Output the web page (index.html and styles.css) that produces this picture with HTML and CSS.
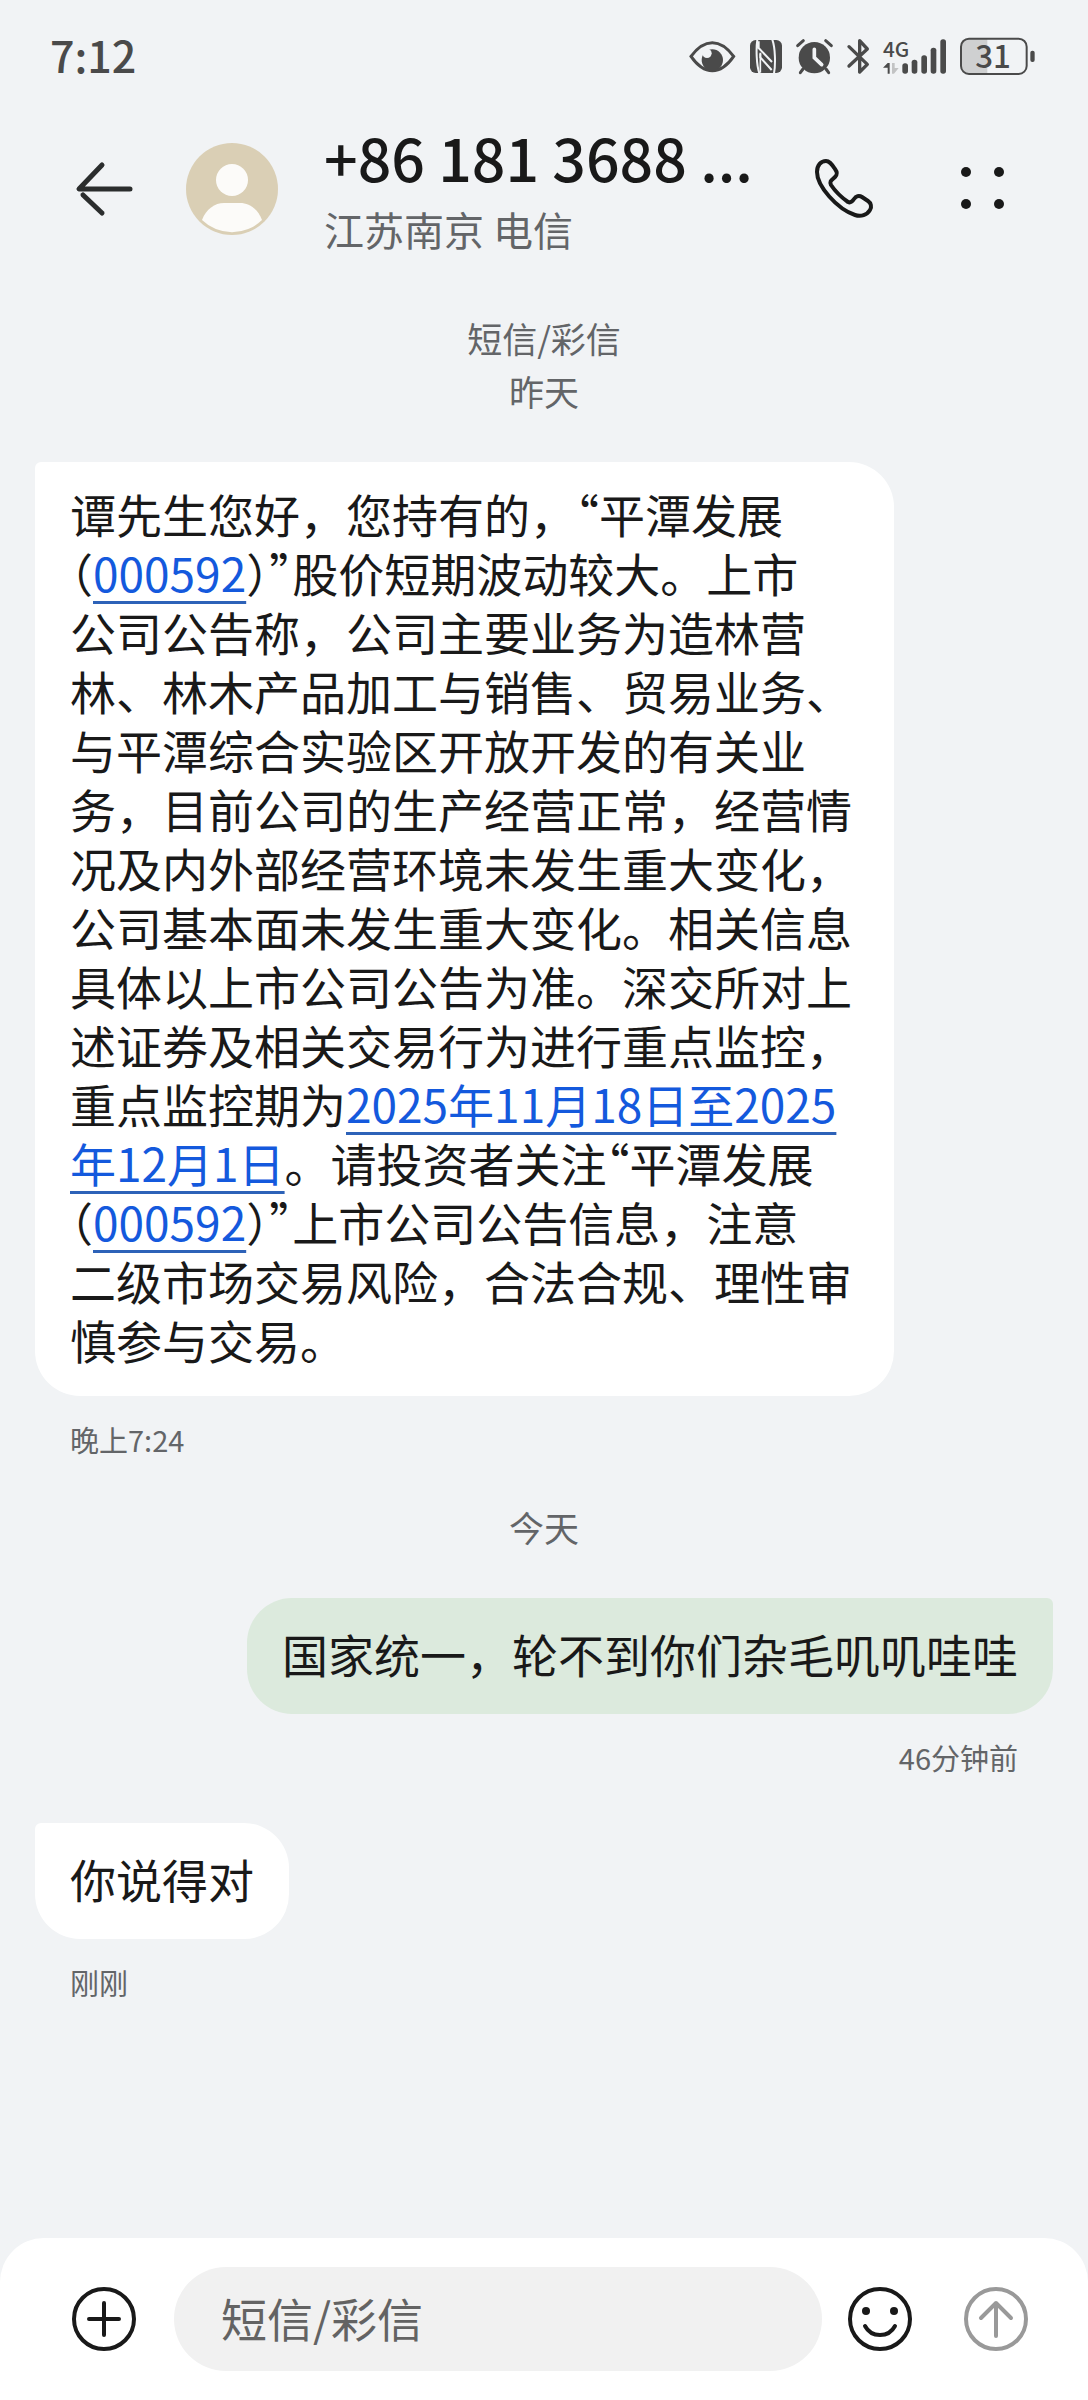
FILE: index.html
```html
<!DOCTYPE html>
<html lang="zh-CN">
<head>
    <meta charset="UTF-8">
    <meta name="viewport" content="width=device-width, initial-scale=1.0">
    <title>短信/彩信</title>
    <link rel="stylesheet" href="styles.css">
</head>
<body>
    <div class="status-bar">
        <span class="clock">7:12</span>
        <div class="status-icons">
            <!-- eye comfort -->
            <svg width="47" height="37" viewBox="54 52 141 111">
                <path d="M60 107C82 77 104 66 124 66s42 11 64 41c-22 32-44 43-64 43s-42-11-64-43z" fill="none" stroke="#4a4a4a" stroke-width="9"/>
                <circle cx="124" cy="118" r="32" fill="#4a4a4a"/>
                <circle cx="108" cy="98" r="14" fill="#f1f3f5"/>
            </svg>
            <!-- nfc -->
            <svg width="32" height="37" viewBox="237 52 96 111">
                <rect x="237" y="58" width="96" height="99" rx="17" fill="#4a4a4a"/>
                <path d="M259 57c-4 25-3 75 6 101M263 62v20l40 42M268 96v14l34 38M304 57c9 25 10 75 5 101" fill="none" stroke="#f1f3f5" stroke-width="6"/>
                <path d="M268 100v56" stroke="#f1f3f5" stroke-width="5"/>
            </svg>
            <!-- alarm -->
            <svg width="37" height="37" viewBox="375 52 111 111">
                <circle cx="430" cy="111" r="47" fill="#4a4a4a"/>
                <path d="M380 75l17-15M464 60l17 15M396 145l-8 11M465 145l8 11" stroke="#4a4a4a" stroke-width="9" stroke-linecap="round"/>
                <path d="M430 86v25l22 21" fill="none" stroke="#f1f3f5" stroke-width="11" stroke-linecap="round"/>
            </svg>
            <!-- bluetooth -->
            <svg width="22" height="37" viewBox="527 52 66 111">
                <path d="M533 78l55 53-23 23v-94l23 25-55 51" fill="none" stroke="#4a4a4a" stroke-width="10" stroke-linecap="round" stroke-linejoin="round"/>
            </svg>
            <!-- mobile signal -->
            <svg width="63" height="37" viewBox="636 52 189 111">
                <text x="636" y="108" class="network">4G</text>
                <path d="M650 159v-18h-14l14-14h6v32z" fill="#4a4a4a"/>
                <path d="M663 127h8v15h12l-14 17h-6z" fill="#c2c3c4"/>
                <g fill="#4a4a4a">
                    <rect x="694" y="128" width="17" height="31" rx="8"/>
                    <rect x="722" y="117" width="17" height="42" rx="8"/>
                    <rect x="751" y="104" width="17" height="55" rx="8"/>
                    <rect x="779" y="81" width="17" height="78" rx="8"/>
                    <rect x="808" y="56" width="17" height="103" rx="8"/>
                </g>
            </svg>
            <!-- battery -->
            <svg width="75" height="39" viewBox="868 50 225 117">
                <path d="M950 55h-55a24 24 0 0 0-24 24v58a24 24 0 0 0 24 24h55z" fill="#cfd0d1"/>
                <rect x="871" y="55" width="197" height="106" rx="24" fill="none" stroke="#4a4a4a" stroke-width="6"/>
                <rect x="1079" y="91" width="13" height="34" rx="6" fill="#4a4a4a"/>
                <text x="967" y="143" text-anchor="middle" class="battery-level">31</text>
            </svg>
        </div>
    </div>

    <header>
        <button type="button" class="icon-button" aria-label="返回">
            <svg width="58" height="54" viewBox="0 0 58 54" fill="none" stroke="#2b2d2d" stroke-width="5" stroke-linecap="round" stroke-linejoin="round">
                <path d="M26 3L3 27h51"/>
                <path d="M7 33l19 18"/>
            </svg>
        </button>
        <svg class="avatar" width="92" height="92" viewBox="0 0 92 92">
            <circle cx="46" cy="46" r="46" fill="#dacfb5"/>
            <circle cx="46" cy="37" r="16" fill="#fcfbf9"/>
            <path d="M16 77C20 66 29 60 38 60h16c9 0 18 6 22 17a43 43 0 0 1-60 0z" fill="#fcfbf9"/>
        </svg>
        <div class="contact">
            <h1>+86 181 3688 ...</h1>
            <p>江苏南京 电信</p>
        </div>
        <button type="button" class="icon-button call" aria-label="拨打电话">
            <svg width="58" height="60" viewBox="0 0 58 60">
                <path d="M2 13C2 6 6 2 11 2c3 0 5 2 9 8 3 4 2 6 0 8-3 3-6 4-4 8 4 6 10 12 17 17 2 1 4 0 6-3s5-4 8-2l6 4c3 2 4 6 2 9-3 5-9 7-15 5C22 50 2 27 2 13z" fill="none" stroke="#191919" stroke-width="4" stroke-linejoin="round"/>
            </svg>
        </button>
        <button type="button" class="icon-button" aria-label="更多">
            <svg width="44" height="44" viewBox="0 0 44 44" fill="#191919">
                <circle cx="5" cy="5" r="5"/>
                <circle cx="38" cy="5" r="5"/>
                <circle cx="5" cy="37" r="5"/>
                <circle cx="38" cy="37" r="5"/>
            </svg>
        </button>
    </header>

    <main>
        <p class="day">短信/彩信<br>昨天</p>

        <div class="message">
            <div class="bubble">
                <p>谭先生您好，您持有的，<span class="half">“</span>平潭发展<span class="half">（</span><a href="#">000592</a><span class="half">）”</span>股价短期波动较大。上市<br>公司公告称，公司主要业务为造林营林、林木产品加工与销售、贸易业务、与平潭综合实验区开放开发的有关业务，目前公司的生产经营正常，经营情况及内外部经营环境未发生重大变化，公司基本面未发生重大变化。相关信息具体以上市公司公告为准。深交所对上述证券及相关交易行为进行重点监控，重点监控期为<a href="#">2025年11月18日至2025年12月1日</a>。请投资者关注<span class="half">“</span>平潭发展<span class="half">（</span><a href="#">000592</a><span class="half">）”</span>上市公司公告信息，注意<br>二级市场交易风险，合法合规、理性审慎参与交易。</p>
            </div>
            <time>晚上7:24</time>
        </div>

        <p class="day">今天</p>

        <div class="message sent">
            <div class="bubble">
                <p>国家统一，轮不到你们杂毛叽叽哇哇</p>
            </div>
            <time>46分钟前</time>
        </div>

        <div class="message">
            <div class="bubble">
                <p>你说得对</p>
            </div>
            <time>刚刚</time>
        </div>
    </main>

    <form class="composer">
        <button type="button" class="icon-button" aria-label="添加">
            <svg width="64" height="64" viewBox="0 0 64 64" fill="none" stroke="#191919" stroke-width="4" stroke-linecap="round">
                <circle cx="32" cy="32" r="30"/>
                <path d="M32 16v32M17 32h30"/>
            </svg>
        </button>
        <input type="text" aria-label="短信/彩信" placeholder="短信/彩信">
        <button type="button" class="icon-button" aria-label="表情">
            <svg width="64" height="64" viewBox="0 0 64 64" fill="none" stroke="#191919" stroke-width="4" stroke-linecap="round">
                <circle cx="32" cy="32" r="30"/>
                <circle cx="18" cy="24" r="4" fill="#191919" stroke="none"/>
                <circle cx="46" cy="24" r="4" fill="#191919" stroke="none"/>
                <path d="M17 39a17 17 0 0 0 30 0"/>
            </svg>
        </button>
        <button type="submit" class="icon-button send" aria-label="发送" disabled>
            <svg width="64" height="64" viewBox="0 0 64 64" fill="none" stroke="#999" stroke-width="4" stroke-linecap="round" stroke-linejoin="round">
                <circle cx="32" cy="32" r="30"/>
                <path d="M17 31l15-15 15 15M32 16v33"/>
            </svg>
        </button>
    </form>
</body>
</html>
```
FILE: styles.css
```css
* {
    box-sizing: border-box;
}

body {
    margin: 0;
    min-height: 100vh;
    display: flex;
    flex-direction: column;
    background: #f1f3f5;
    color: #191919;
    font-family: "Noto Sans CJK SC", sans-serif;
}

h1, p {
    margin: 0;
}

svg {
    display: block;
    overflow: visible;
}

.icon-button {
    padding: 0;
    border: none;
    background: none;
    cursor: pointer;
}

/* Status bar */
.status-bar {
    display: flex;
    justify-content: space-between;
    align-items: center;
    height: 112px;
    padding: 0 53px 0 50px;
}

.clock {
    padding-bottom: 4px;
    color: #4a4a4a;
    font-size: 43px;
    font-weight: 500;
    line-height: 60px;
}

.status-icons {
    display: flex;
    align-items: center;
    gap: 14px;
}

.network {
    font-size: 62px;
    font-weight: 500;
    fill: #4a4a4a;
}

.battery-level {
    font-size: 94px;
    font-weight: 500;
    fill: #4a4a4a;
}

/* Conversation header */
header {
    display: flex;
    align-items: center;
    margin-top: 5px;
    padding: 0 83px 0 76px;
}

.avatar {
    margin: 0 46px 0 52px;
}

.contact {
    flex: 1;
    min-width: 0;
    white-space: nowrap;
}

.contact h1 {
    font-size: 59px;
    font-weight: 500;
    line-height: 80px;
}

.contact p {
    color: #636568;
    font-size: 40px;
    line-height: 64px;
}

.call {
    margin-right: 88px;
}

/* Messages */
main {
    flex: 1;
    display: flex;
    flex-direction: column;
    gap: 40px;
    padding: 50px 35px;
}

.day {
    color: #636568;
    font-size: 35px;
    line-height: 53px;
    text-align: center;
}

.message {
    display: flex;
    flex-direction: column;
    align-items: flex-start;
    margin-top: 5px;
}

.bubble {
    display: flex;
    align-items: center;
    min-height: 116px;
    max-width: calc(100% - 159px);
    padding: 22px 35px 27px;
    border-radius: 6px 45px 45px 45px;
    background: #fff;
    font-size: 46px;
    line-height: 59px;
}

.bubble a {
    color: #1459dd;
    text-decoration: underline;
    text-decoration-color: #2d62b8;
    text-decoration-thickness: 3px;
    text-underline-offset: 9px;
}

/* punctuation set on half an em */
.half {
    font-feature-settings: "halt";
}

.message time {
    margin-top: 22px;
    padding: 0 35px;
    color: #636568;
    font-size: 29px;
    line-height: 42px;
}

.message.sent {
    align-items: flex-end;
}

.sent .bubble {
    border-radius: 45px 6px 45px 45px;
    background: #dceadd;
}

/* Composer */
.composer {
    display: flex;
    align-items: center;
    padding: 29px 60px 29px 72px;
    border-radius: 44px 44px 0 0;
    background: #fff;
}

.composer input {
    flex: 1;
    min-width: 0;
    height: 104px;
    margin: 0 26px 0 38px;
    padding: 0 47px 4px;
    border: none;
    border-radius: 52px;
    background: #f1f1f1;
    color: #191919;
    font-family: inherit;
    font-size: 46px;
}

.composer input::placeholder {
    color: #636363;
    opacity: 1;
}

.send {
    margin-left: 52px;
}
```
